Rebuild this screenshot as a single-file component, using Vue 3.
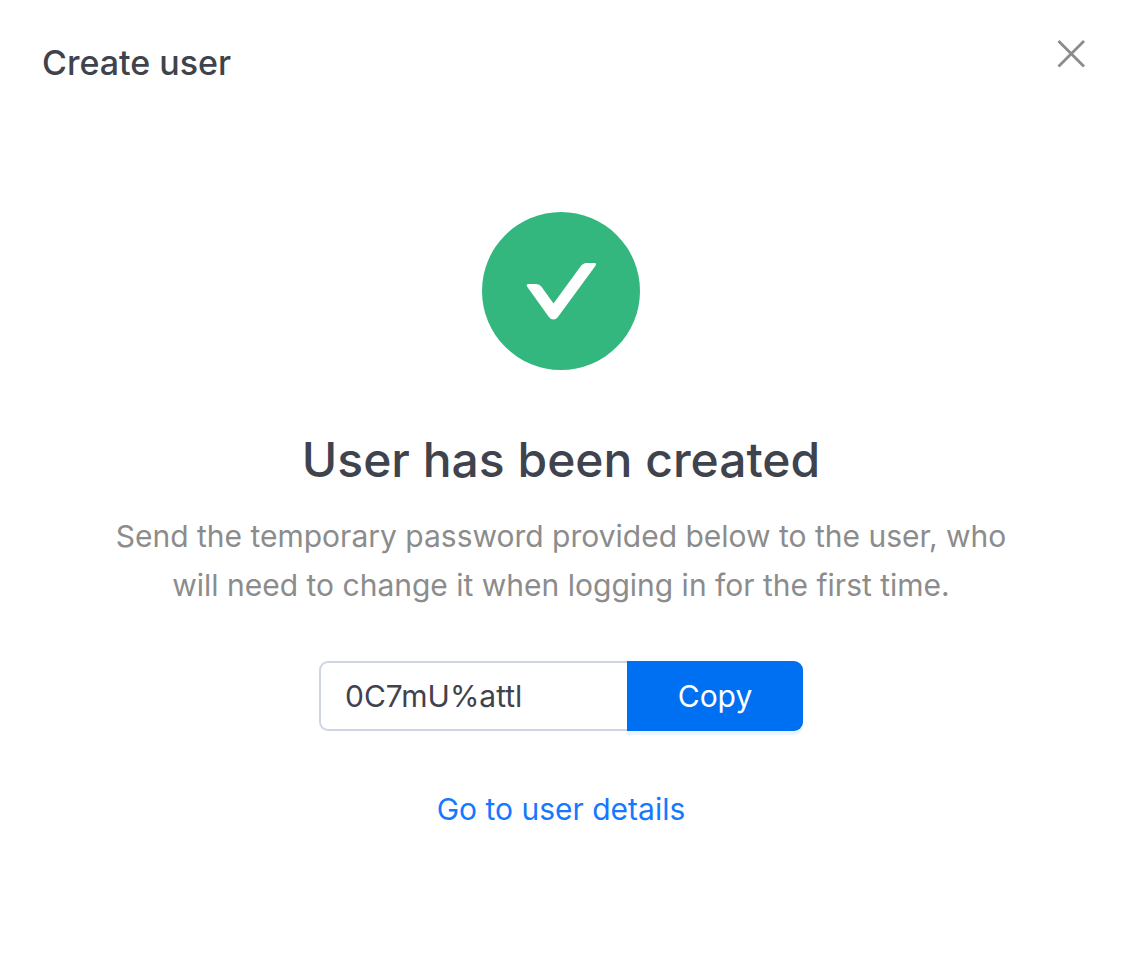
<script setup>
import { ref } from 'vue'

const password = ref('0C7mU%attl')
const copy = () => navigator.clipboard?.writeText(password.value)
</script>

<template>
  <main class="dialog">
    <header class="top">
      <h1>Create user</h1>
      <button class="close" type="button" aria-label="Close">
        <svg width="28" height="28" viewBox="0 0 28 28" fill="none" stroke="#8b8b8b" stroke-width="2.8">
          <path d="M1.500 1 27 26.500M27 1 1.500 26.500" />
        </svg>
      </button>
    </header>
    <section class="result">
      <svg class="badge" width="158" height="158" viewBox="0 0 158 158" aria-hidden="true">
        <circle cx="79" cy="79" r="79" fill="#33b77f" />
        <path
          fill="#fff"
          d="M45.200 74.700Q43.700 72 46.500 72H54Q57.500 72 59.500 74.700L71.500 91.500L98.500 54.500Q101 51 104.500 51H112.500Q115 51 113.500 53.700L77 103.500Q74.500 107.500 71.500 107.500Q68.500 107.500 66.500 104.500Z"
        />
      </svg>
      <h2>User has been created</h2>
      <p>Send the temporary password provided below to the user, who will need to change it when logging in for the first time.</p>
      <div class="field">
        <input v-model="password" type="text" aria-label="Temporary password" readonly />
        <button type="button" @click="copy">Copy</button>
      </div>
      <a href="#details">Go to user details</a>
    </section>
  </main>
</template>

<style>
body {
  margin: 0;
  background: #fff;
}
</style>

<style scoped>
.dialog {
  box-sizing: border-box;
  min-height: 100vh;
  padding: 40px 41px 40px 37px;
  background: #fff;
  color: #3f434d;
  font-family: Inter, "Liberation Sans", sans-serif;
}
.top {
  display: flex;
  justify-content: space-between;
  align-items: flex-start;
}
h1 {
  margin: 0 5px;
  font-size: 34px;
  line-height: 46px;
  font-weight: 500;
}
.close {
  display: flex;
  padding: 0;
  border: 0;
  background: none;
  cursor: pointer;
}
.result {
  display: flex;
  flex-direction: column;
  align-items: center;
  max-width: 920px;
  margin: 126px auto 0;
  text-align: center;
}
h2 {
  margin: 58px 0 0;
  font-size: 48px;
  line-height: 64px;
  font-weight: 500;
}
p {
  margin: 20px 0 0;
  color: #8c8c8c;
  font-size: 30px;
  line-height: 49px;
}
.field {
  display: flex;
  width: 484px;
  max-width: 100%;
  height: 70px;
  margin-top: 51px;
}
.field input {
  box-sizing: border-box;
  flex: 1;
  min-width: 0;
  padding: 0 24px;
  border: 2px solid #cfd5e2;
  border-right: 0;
  border-radius: 9px 0 0 9px;
  outline: 0;
  background: #fff;
  color: #3f434d;
  font-family: inherit;
  font-size: 30px;
}
.field button {
  width: 176px;
  border: 0;
  border-radius: 0 9px 9px 0;
  background: #0070f3;
  box-shadow: 0 4px 0 #eaf5ff;
  color: #fff;
  font-family: inherit;
  font-size: 30px;
  cursor: pointer;
}
a {
  margin-top: 54px;
  color: #1677ff;
  font-size: 30px;
  line-height: 49px;
  text-decoration: none;
}
</style>
